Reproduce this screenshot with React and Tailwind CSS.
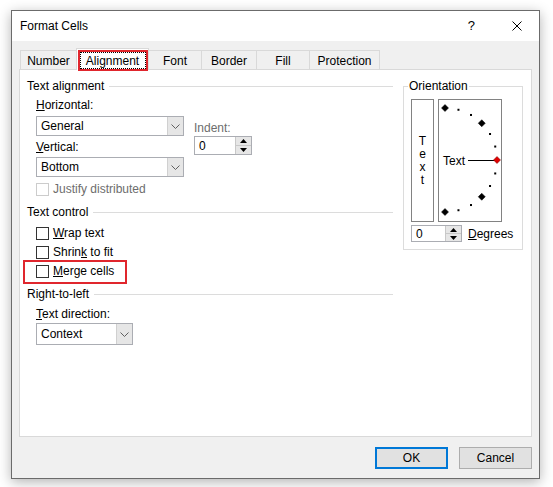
import React from "react";

function GroupHeader({ label, className = "" }) {
  return (
    <div className={`flex items-center h-4 leading-4 ${className}`}>
      <span>{label}</span>
      <div className="ml-[5px] flex-1 h-px bg-[#dcdcdc]" />
    </div>
  );
}

function Chevron() {
  return (
    <svg width="9" height="5" viewBox="0 0 9 5">
      <path d="M0.5 0.5 L4.5 4.5 L8.5 0.5" stroke="#606060" strokeWidth="1" fill="none" />
    </svg>
  );
}

function Select({ value, className = "" }) {
  return (
    <div className={`flex border border-[#abadb3] bg-white ${className}`}>
      <div className="flex-1 flex items-center pl-[4px]">{value}</div>
      <div className="w-[16px] bg-[#e6e6e6] border-l border-[#d0d0d0] flex items-center justify-center">
        <Chevron />
      </div>
    </div>
  );
}

function Spinner({ className = "" }) {
  return (
    <div className={`flex border border-[#abadb3] bg-white ${className}`}>
      <div className="flex-1 flex items-center pl-[4px]">0</div>
      <div className="w-[16px] flex flex-col border-l border-[#c8c8c8]">
        <div className="flex-1 bg-[#e6e6e6] flex items-center justify-center border-b border-[#c8c8c8]">
          <svg width="7" height="4" viewBox="0 0 7 4">
            <path d="M0 4 L3.5 0 L7 4 Z" fill="#000" />
          </svg>
        </div>
        <div className="flex-1 bg-[#e6e6e6] flex items-center justify-center">
          <svg width="7" height="4" viewBox="0 0 7 4">
            <path d="M0 0 L3.5 4 L7 0 Z" fill="#000" />
          </svg>
        </div>
      </div>
    </div>
  );
}

function Checkbox({ children, disabled = false, className = "" }) {
  return (
    <div className={`flex items-center h-4 leading-4 ${className}`}>
      <div
        className={
          disabled
            ? "w-[13px] h-[13px] border border-[#cccccc] bg-white"
            : "w-[13px] h-[13px] border border-[#333333] bg-white"
        }
      />
      <span className={disabled ? "ml-[4px] text-[#6d6d6d]" : "ml-[4px]"}>{children}</span>
    </div>
  );
}

function Dial() {
  const cx = 6;
  const cy = 60;
  const r = 52;
  const items = [];
  for (let deg = -90; deg <= 90; deg += 15) {
    const a = (deg * Math.PI) / 180;
    const x = cx + r * Math.cos(a);
    const y = cy - r * Math.sin(a);
    if (deg % 45 === 0) {
      const s = 3.5;
      items.push(
        <polygon
          key={deg}
          points={`${x},${y - s} ${x + s},${y} ${x},${y + s} ${x - s},${y}`}
          fill={deg === 0 ? "#e00000" : "#000"}
          stroke={deg === 0 ? "#7a0000" : "#000"}
          strokeWidth="0.5"
        />
      );
    } else {
      items.push(<rect key={deg} x={x - 1} y={y - 1} width="2" height="2" fill="#000" />);
    }
  }
  return (
    <svg width="62" height="121" viewBox="0 0 62 121">
      <text x="4" y="64.5" fontSize="12" fontFamily="Liberation Sans, Arial, sans-serif" fill="#000">
        Text
      </text>
      <line x1="29" y1="60.5" x2="56" y2="60.5" stroke="#000" strokeWidth="1" />
      {items}
    </svg>
  );
}

export default function App() {
  return (
    <div className="w-[553px] h-[487px] bg-white pl-[11px] pt-[10px] font-['Liberation_Sans',Arial,sans-serif] text-[12px] leading-4 text-black">
      <div className="w-[529px] h-[469px] border border-[#6b6b6b] bg-[#f0f0f0] flex flex-col shadow-[0_3px_12px_rgba(0,0,0,0.3)]">
        {/* Title bar */}
        <div className="h-[30px] bg-white flex items-center pl-[8px] shrink-0">
          <span>Format Cells</span>
          <span className="ml-auto text-[13px]">?</span>
          <svg className="ml-[37px] mr-[17px]" width="10" height="10" viewBox="0 0 10 10">
            <path d="M0.5 0.5 L9.5 9.5 M9.5 0.5 L0.5 9.5" stroke="#000" strokeWidth="1" />
          </svg>
        </div>

        {/* Body */}
        <div className="flex flex-col px-[7px] pt-[7px] pb-[9px]">
          {/* Tabs */}
          <div className="flex items-end h-[21px] pl-px">
            <div className="w-[56px] h-[19px] border-l border-t border-[#d9d9d9] flex items-center justify-center pt-[2px]">
              Number
            </div>
            <div className="relative z-10 -mb-px w-[73px] h-[22px] bg-white border-l border-t border-r border-[#d9d9d9] flex items-center justify-center pt-[2px]">
              Alignment
              <div className="absolute left-[1px] right-0 top-[1px] -bottom-[1px] border-2 border-[#e0262d]">
                <div className="w-full h-full border border-dotted border-black" />
              </div>
            </div>
            <div className="w-[52px] h-[19px] border-t border-[#d9d9d9] flex items-center justify-center pt-[2px]">
              Font
            </div>
            <div className="w-[55px] h-[19px] border-l border-t border-[#d9d9d9] flex items-center justify-center pt-[2px]">
              Border
            </div>
            <div className="w-[53px] h-[19px] border-l border-t border-[#d9d9d9] flex items-center justify-center pt-[2px]">
              Fill
            </div>
            <div className="w-[71px] h-[19px] border-l border-t border-r border-[#d9d9d9] flex items-center justify-center pt-[2px]">
              Protection
            </div>
          </div>

          {/* Panel */}
          <div className="h-[368px] border border-[#d9d9d9] bg-white flex items-start pl-[7px] pt-[8px]">
            {/* Left column */}
            <div className="w-[366px] flex flex-col">
              <GroupHeader label="Text alignment" />
              <div className="flex ml-[9px] mt-[3px]">
                <div className="flex flex-col w-[148px]">
                  <div className="h-4 leading-4">
                    <u>H</u>orizontal:
                  </div>
                  <Select className="mt-[3px] h-[20px]" value="General" />
                  <div className="mt-[3px] h-4 leading-4">
                    <u>V</u>ertical:
                  </div>
                  <Select className="mt-[2px] h-[20px]" value="Bottom" />
                </div>
                <div className="ml-[10px] mt-[23px] flex flex-col">
                  <div className="h-4 leading-4 text-[#6d6d6d]">Indent:</div>
                  <Spinner className="w-[58px] h-[19px]" />
                </div>
              </div>
              <Checkbox disabled className="mt-[4px] ml-[9px]">
                Justify distributed
              </Checkbox>

              <GroupHeader className="mt-[7px]" label="Text control" />
              <Checkbox className="mt-[5px] ml-[9px]">
                <u>W</u>rap text
              </Checkbox>
              <Checkbox className="mt-[3px] ml-[9px]">
                Shrin<u>k</u> to fit
              </Checkbox>
              <div className="relative mt-[3px] ml-[9px]">
                <Checkbox>
                  <u>M</u>erge cells
                </Checkbox>
                <div className="absolute -left-[13px] -top-[3px] w-[104px] h-[24px] border-2 border-[#e0262d]" />
              </div>

              <GroupHeader className="mt-[7px]" label="Right-to-left" />
              <div className="mt-[4px] ml-[9px] h-4 leading-4">
                <u>T</u>ext direction:
              </div>
              <Select className="mt-[1px] ml-[9px] w-[97px] h-[22px]" value="Context" />
            </div>

            {/* Orientation */}
            <fieldset className="ml-[10px] w-[120px] border border-[#dcdcdc] p-0 m-0">
              <legend className="ml-[4px] px-px h-4 leading-4">Orientation</legend>
              <div className="px-[7px] pt-[5px] pb-[7px]">
                <div className="flex gap-[4px]">
                  <div className="w-[23px] h-[123px] border border-[#828282] flex flex-col items-center justify-center leading-[13px]">
                    <div>T</div>
                    <div>e</div>
                    <div>x</div>
                    <div>t</div>
                  </div>
                  <div className="w-[64px] h-[123px] border border-[#828282]">
                    <Dial />
                  </div>
                </div>
                <div className="mt-[3px] flex items-center">
                  <Spinner className="w-[51px] h-[17px]" />
                  <span className="ml-[6px]">
                    <u>D</u>egrees
                  </span>
                </div>
              </div>
            </fieldset>
          </div>

          {/* Buttons */}
          <div className="mt-[10px] flex justify-end gap-[11px]">
            <div className="w-[73px] h-[22px] border-2 border-[#0078d7] bg-[#e1e1e1] flex items-center justify-center">
              OK
            </div>
            <div className="w-[73px] h-[22px] border border-[#adadad] bg-[#e1e1e1] flex items-center justify-center">
              Cancel
            </div>
          </div>
        </div>
      </div>
    </div>
  );
}
